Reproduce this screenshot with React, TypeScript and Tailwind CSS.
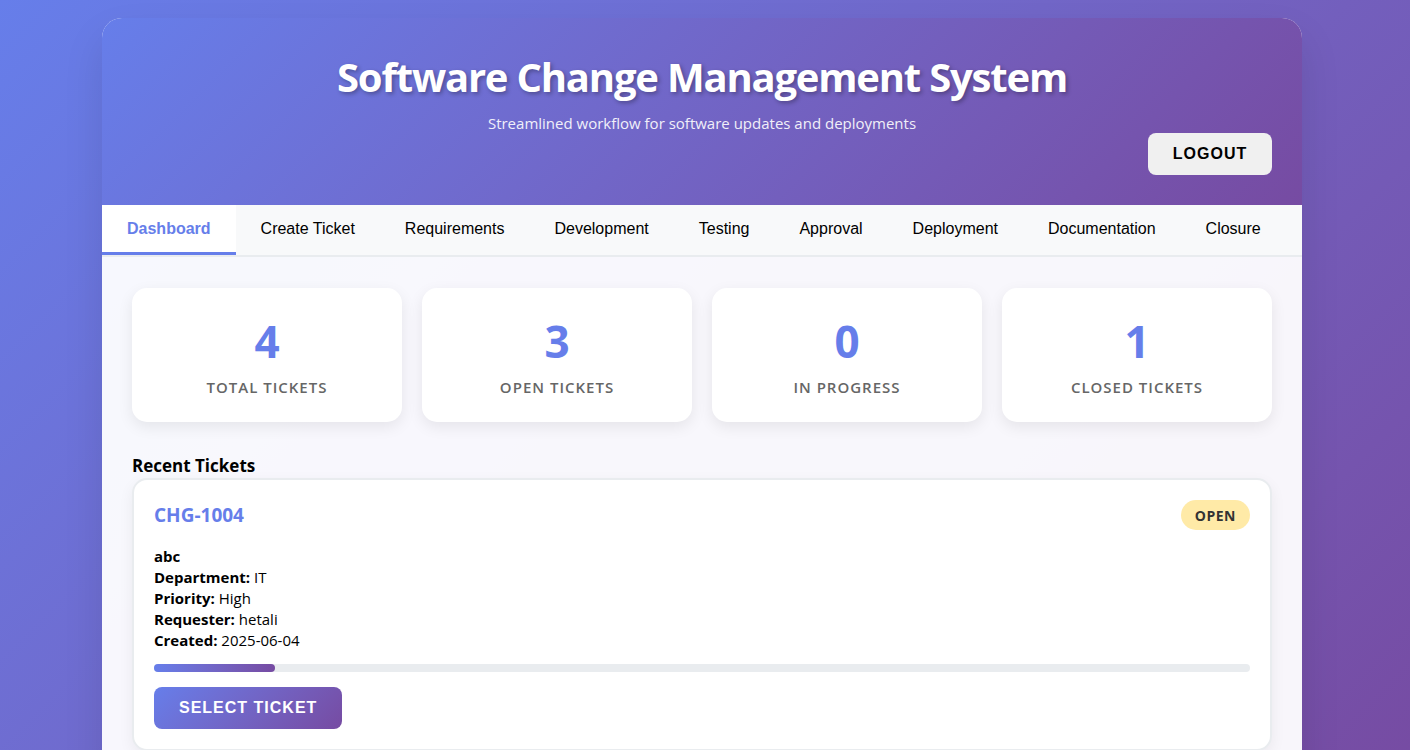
const tabs = [
  'Dashboard',
  'Create Ticket',
  'Requirements',
  'Development',
  'Testing',
  'Approval',
  'Deployment',
  'Documentation',
  'Closure',
]

const stats = [
  { value: 4, label: 'Total Tickets' },
  { value: 3, label: 'Open Tickets' },
  { value: 0, label: 'In Progress' },
  { value: 1, label: 'Closed Tickets' },
]

const sans = "font-['Open_Sans','Noto_Sans',sans-serif]"
const arial = "font-['Liberation_Sans',Arial,sans-serif]"

const StatCard = ({ value, label }: { value: number; label: string }) => (
  <div className="rounded-[15px] bg-white py-[25px] text-center shadow-[0_5px_15px_rgba(0,0,0,0.08)]">
    <div className="text-[44px] font-bold leading-[56px] text-[#667eea]">{value}</div>
    <div className="mt-[8px] text-[15px] font-semibold uppercase leading-5 tracking-[1px] text-[#666]">
      {label}
    </div>
  </div>
)

const TicketCard = () => (
  <div className="rounded-[15px] border-2 border-[#e9ecef] bg-white p-5 shadow-[0_5px_15px_rgba(0,0,0,0.06)]">
    <div className="flex h-[30px] items-center justify-between">
      <h3 className="text-[19px] font-bold text-[#667eea]">CHG-1004</h3>
      <span className="flex h-[30px] items-center rounded-full bg-[#ffeaa7] px-[14px] text-[14px] font-bold uppercase tracking-[0.5px] text-[#333]">
        Open
      </span>
    </div>
    <div className="mt-[16px] text-[15px] leading-[21px] text-black">
      <div className="font-bold">abc</div>
      <div>
        <span className="font-bold">Department:</span> IT
      </div>
      <div>
        <span className="font-bold">Priority:</span> High
      </div>
      <div>
        <span className="font-bold">Requester:</span> hetali
      </div>
      <div>
        <span className="font-bold">Created:</span> 2025-06-04
      </div>
    </div>
    <div className="mt-[13px] h-2 w-full rounded-full bg-[#e9ecef]">
      <div className="h-2 w-[11%] rounded-full bg-linear-to-r from-[#667eea] to-[#764ba2]" />
    </div>
    <button
      className={`${arial} mt-[15px] h-[42px] rounded-lg bg-linear-135 from-[#667eea] to-[#764ba2] px-[25px] text-[16px] font-bold uppercase tracking-[1px] text-white`}
    >
      Select Ticket
    </button>
  </div>
)

const App = () => {
  return (
    <div className={`${sans} min-h-screen bg-linear-135 from-[#667eea] to-[#764ba2] pr-[6px] pt-[18px]`}>
      <div className="mx-auto w-[1200px] overflow-hidden rounded-[20px] bg-white/95 shadow-[0_20px_40px_rgba(0,0,0,0.1)]">
        {/* header */}
        <header className="bg-linear-135 from-[#667eea] to-[#764ba2] px-[30px] pb-[30px] pt-[30px] text-center text-white">
          <h1 className="text-[40px] font-bold leading-[58px] tracking-[-1.2px] [text-shadow:2px_2px_4px_rgba(0,0,0,0.3)]">
            Software Change Management System
          </h1>
          <p className="mt-[7px] text-[15px] leading-5 opacity-90">
            Streamlined workflow for software updates and deployments
          </p>
          <div className="flex justify-end">
            <button
              className={`${arial} h-[42px] w-[124px] rounded-lg bg-[#f0f0f0] text-[16px] font-bold uppercase tracking-[1px] text-black`}
            >
              Logout
            </button>
          </div>
        </header>

        {/* tabs */}
        <nav className="flex border-b-2 border-[#e9ecef] bg-[#f8f9fa]">
          {tabs.map((tab, i) => (
            <button
              key={tab}
              className={`${arial} border-b-[3px] px-[25px] pb-[13px] pt-[14px] text-[16px] leading-5 ${
                i === 0
                  ? 'border-[#667eea] bg-white font-bold text-[#667eea]'
                  : 'border-transparent text-black'
              }`}
            >
              {tab}
            </button>
          ))}
        </nav>

        {/* content */}
        <main className="px-[30px] pb-[30px] pt-[31px]">
          <div className="mb-[31px] grid grid-cols-4 gap-5">
            {stats.map((s) => (
              <StatCard key={s.label} value={s.value} label={s.label} />
            ))}
          </div>
          <h2 className="text-[17px] font-bold leading-[25px] text-black">Recent Tickets</h2>
          <TicketCard />
        </main>
      </div>
    </div>
  )
}

export default App
